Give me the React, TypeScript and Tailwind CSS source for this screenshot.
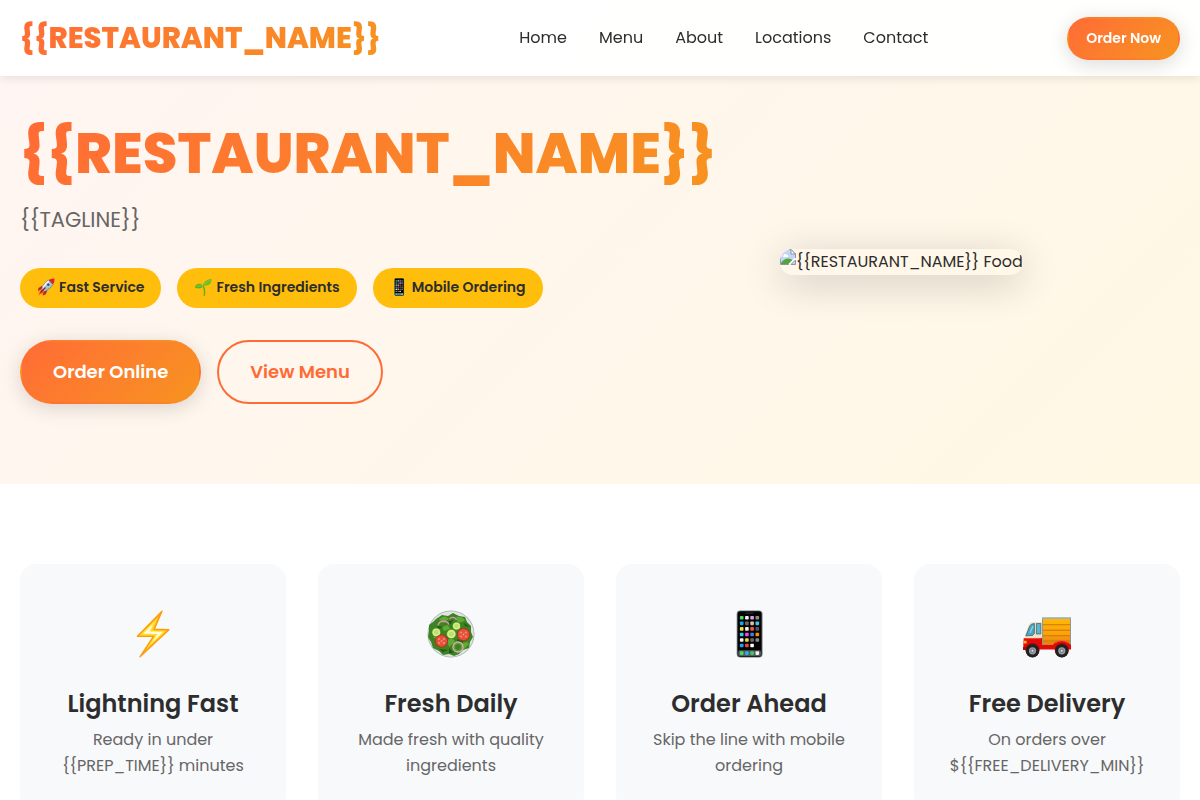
import type { ReactNode } from "react";

const GRADIENT = "bg-linear-135 from-[#ff6b35] to-[#f7931e]";
const GRADIENT_TEXT = "bg-linear-135 from-[#ff6b35] to-[#f7931e] bg-clip-text text-transparent";

function BoltIcon() {
  return (
    <svg viewBox="0 0 48 48" className="size-12" aria-hidden="true">
      <defs>
        <linearGradient id="bolt" x1="0" y1="0" x2="0" y2="1">
          <stop offset="0" stopColor="#ffb300" />
          <stop offset="0.5" stopColor="#ffd428" />
          <stop offset="1" stopColor="#ffb300" />
        </linearGradient>
      </defs>
      <path d="M33 1.200 8.500 26.200l16 .2L11 46.800 39.900 19.700 25.200 19.200Z" fill="url(#bolt)" stroke="#ff9a0c" strokeWidth="1.400" strokeLinejoin="round" />
      <path d="M29 7.500 12.500 24.300 27.500 24.600 17.500 38.500 36 21.300 22 20.800Z" fill="#ffe94a" />
      <path d="M23.500 14.500 14.500 23.600 28.800 24 22.500 33 33.500 22.200 20.500 21.600Z" fill="#fffde6" />
    </svg>
  );
}

function Tomato({ x, y }: { x: number; y: number }) {
  return (
    <g transform={`translate(${x} ${y})`}>
      <circle r="6.500" fill="#b92a1a" />
      <circle r="5.700" fill="#e5503b" />
      <g fill="#f08a6f">
        <ellipse cx="-2.400" cy="-2" rx="1.200" ry=".9" />
        <ellipse cx="2.400" cy="-2" rx="1.200" ry=".9" />
        <ellipse cx="-2.400" cy="2" rx="1.200" ry=".9" />
        <ellipse cx="2.400" cy="2" rx="1.200" ry=".9" />
      </g>
      <circle r=".8" fill="#f7b59f" />
    </g>
  );
}

function Cucumber({ x, y, r }: { x: number; y: number; r: number }) {
  return (
    <g transform={`translate(${x} ${y})`}>
      <circle r={r} fill="#4d9a2a" />
      <circle r={r - 0.7} fill="#d6ee8e" />
      <circle r={r / 2} fill="#bfe066" />
    </g>
  );
}

function SaladIcon() {
  return (
    <svg viewBox="0 0 48 48" className="size-12" aria-hidden="true">
      <circle cx="24" cy="24" r="23.500" fill="#a9b0b0" />
      <circle cx="24" cy="24" r="22.700" fill="#dfe4e4" />
      <path d="M9 9l6-4 6 1 5-3 6 3 6 1 2 5 4 4 0 6 2 5-3 5-1 6-6 2-4 4-5 2-5-2-6 1-4-4-6-3-2-6-3-5 1-6 0-6 4-3Z" fill="#3f8222" />
      <path d="M12 9q6-5 10 0l-6 4ZM29 7q7-1 9 4l-7 2ZM6 27q5-3 8-1l-4 4ZM20 30q7-3 8 2l-6 5ZM36 33q5-2 6 1l-6 6ZM31 21l5-3 3 2-5 3ZM15 17l6-2 2 4-6 2Z" fill="#63a935" />
      <path d="M10 16l6 1-5 2ZM16 25l6 3-6 0ZM22 38l5 5-5 0ZM30 29l7 3-7 0ZM21 12l5-2-3 5ZM12 39l9 1-5 2ZM37 13l6 4-5-1Z" fill="#1f5915" />
      <g fill="none" strokeWidth="1.300">
        <path d="M11 15.500c1-5.500 9-5.500 11-1M22.500 9c2-2.500 6-2 7 1" stroke="#d995ad" />
        <circle cx="31" cy="37" r="5" stroke="#d8b3ae" />
        <circle cx="31" cy="37" r="3.600" stroke="#86b45a" strokeWidth=".7" />
      </g>
      <Cucumber x={9.300} y={22.300} r={4.600} />
      <Cucumber x={29.500} y={16} r={4.300} />
      <Cucumber x={24.300} y={24} r={5} />
      <Tomato x={14.500} y={31} />
      <Tomato x={36.500} y={24.500} />
    </svg>
  );
}

const APP_ROWS = [
  ["#45dd5c", "#f2f2f2", "#e19bea", "#8c8c8c"],
  ["#1ca5f5", "#6b6b70", "#d9c3a0", "#3cc8ee"],
  ["#f5e02e", "#f2f2f2", "#f5544a", "#55555a"],
  ["#35c8ee", "#ee4be0", "#3e7bf0", "#ff8a00"],
  ["#f2f2f2", "#f0de3c", "#6b6b70", "#8a8a8e"],
  ["#1ca5f5", "#f5443a", "#ffffff"],
];
const DOCK = ["#45dd5c", "#1fb4f0", "#35cf62", "#f2f2f2"];

function PhoneIcon({ className }: { className: string }) {
  return (
    <svg viewBox="0 0 48 48" className={className} aria-hidden="true">
      <rect x="11.700" y=".5" width="25.800" height="47" rx="3.500" fill="#6f7478" />
      <rect x="12.600" y="1.200" width="24" height="45.600" rx="3" fill="#050505" />
      <rect x="20.500" y="2.500" width="8" height="1.200" rx=".6" fill="#2b2b2e" />
      {APP_ROWS.map((row, r) =>
        row.map((color, c) => (
          <rect key={`${r}-${c}`} x={14.9 + c * 5.2} y={6 + r * 5.55} width="3.600" height="3.600" rx=".8" fill={color} />
        )),
      )}
      <rect x="13.200" y="40.300" width="22.800" height="5.700" rx="1.500" fill="#55585c" />
      {DOCK.map((color, c) => (
        <rect key={c} x={14.9 + c * 5.2} y="41.300" width="3.600" height="3.600" rx=".8" fill={color} />
      ))}
    </svg>
  );
}

function TruckIcon() {
  return (
    <svg viewBox="0 0 48 48" className="size-12" aria-hidden="true">
      <defs>
        <linearGradient id="cargo" x1="0" y1="0" x2="0" y2="1">
          <stop offset="0" stopColor="#ffb803" />
          <stop offset="0.6" stopColor="#ff9f0a" />
          <stop offset="1" stopColor="#e07f12" />
        </linearGradient>
      </defs>
      <rect x="19" y="7.200" width="29" height="30" fill="#8f979c" />
      <rect x="19" y="7.200" width="29" height="1.300" fill="#b9c3cc" />
      <rect x="20" y="9" width="27" height="26" fill="url(#cargo)" />
      <path d="M20 14.800h27M20 20.300h27M20 25.700h27M20 31h27" stroke="#c57a08" strokeWidth="1.100" />
      <path d="M1 30 5.300 15.500Q6.500 12 10.500 12H19V32H1Z" fill="#efe4ca" />
      <path d="M2.800 25.800 6.500 16.500Q7.300 13.800 11.400 13.500V23.500L9.500 25.500Z" fill="#4aa6bf" stroke="#3a5c63" strokeWidth=".7" />
      <path d="M13.400 13.500h4.400v10.500h-4.400Z" fill="#5db5cf" stroke="#3a5c63" strokeWidth=".7" />
      <path d="M7 23l3-7" stroke="#92d4df" strokeWidth="1.200" />
      <path d="M.8 28H19V35H30Q32 31 38.500 31T47 34.500H48.200V39.500H.5Q0 34 .8 28Z" fill="#e00b08" />
      <path d="M1 28.600h17M32.500 33Q34.500 30.800 38.500 30.800T45 33" stroke="#ff4a3d" strokeWidth=".9" fill="none" />
      <path d="M.6 30.800h3v2.800H.5Z" fill="#ffae35" />
      <path d="M0 37h3.500v3H0Z" fill="#b00806" />
      {[9.5, 38.8].map((cx) => (
        <g key={cx}>
          <circle cx={cx} cy="40.300" r="7" fill="#8f0a08" />
          <circle cx={cx} cy="40.800" r="6.600" fill="#202225" />
          <circle cx={cx} cy="40.800" r="3.600" fill="#9a9fa4" />
          <circle cx={cx} cy="40.800" r="2.200" fill="#7a7f84" />
          <circle cx={cx} cy="40.800" r="1" fill="#e2e5e7" />
        </g>
      ))}
    </svg>
  );
}

function RocketIcon() {
  return (
    <svg viewBox="0 0 18 18" className="size-[18px]" aria-hidden="true">
      <path d="M1 13 4 10l4 4-3 3-1-1-3 2 .7-2.600Z" fill="#f7a11b" />
      <path d="M1.500 17 4.500 11.500 7 14Z" fill="#ed4b18" />
      <path d="M5.500 7.500 1.500 10 1 13l4-2.200ZM10.500 12.500 8.500 16.500 5.500 17.500 7 13Z" fill="#c81e2b" />
      <path d="M4.500 10.500Q7 4.500 11.500 2L16 6.500Q13.500 11 7.500 13.500Z" fill="#aebfca" stroke="#526b80" strokeWidth=".6" />
      <path d="M6 9.500Q8 5.500 12 3" stroke="#f2f7fa" strokeWidth="1.500" fill="none" />
      <path d="M11.500 2Q14 .3 17.500.5 17.700 4 16 6.500Z" fill="#d52632" />
      <circle cx="11.300" cy="6.700" r="1.800" fill="#24578d" stroke="#e3edf2" strokeWidth=".6" />
      <path d="M3.500 14.500 8.500 9.500" stroke="#93202b" strokeWidth="1.300" />
    </svg>
  );
}

function SeedlingIcon() {
  return (
    <svg viewBox="0 0 18 18" className="size-[18px]" aria-hidden="true">
      <path d="M10.300 17.200Q11.200 12 9.200 8" stroke="#62b01f" strokeWidth="1.500" fill="none" strokeLinecap="round" />
      <path d="M9.300 8.200Q8.800 2.500 17.500.8 18 6.500 12.500 7.500 10.300 7.800 9.300 8.200Z" fill="#6cbc24" />
      <path d="M9.500 8.200Q6 11.800.8 9.500 1.500 5.800 5.700 5.700 8.500 5.800 9.500 8.200Z" fill="#62b322" />
      <path d="M10 7.500Q12.500 4 16 2.200M3 8.700Q6 6.700 9 7.900" stroke="#93d644" strokeWidth=".7" fill="none" />
    </svg>
  );
}

function BrokenImageIcon() {
  return (
    <svg viewBox="0 0 16 16" className="size-4 shrink-0" aria-hidden="true">
      <path d="M.5.5H11L15.500 5V9L9 15.500H.5Z" fill="#c3d5f8" stroke="#8d949c" />
      <path d="M11 .5V5h4.500Z" fill="#fff" stroke="#8d949c" strokeLinejoin="round" />
      <path d="M3.500 6.500a1.800 1.800 0 0 1 3.200-.8A1.500 1.500 0 0 1 8 8H3.500a.8.8 0 0 1 0-1.500Z" fill="#fff" />
      <path d="M1 15V14Q4 9.500 8 9.500 11 9.500 12.500 11L9 15Z" fill="#4ea63c" />
      <path d="M9 15.500 15.500 9" stroke="#fff" strokeWidth="1.600" />
      <path d="M11 15.500H15.500V11Z" fill="#c3d5f8" stroke="#8d949c" />
    </svg>
  );
}

const NAV = ["Home", "Menu", "About", "Locations", "Contact"];

const BADGES: { icon: ReactNode; label: string }[] = [
  { icon: <RocketIcon />, label: "Fast Service" },
  { icon: <SeedlingIcon />, label: "Fresh Ingredients" },
  { icon: <PhoneIcon className="size-[18px]" />, label: "Mobile Ordering" },
];

const FEATURES: { icon: ReactNode; title: string; text: string }[] = [
  { icon: <BoltIcon />, title: "Lightning Fast", text: "Ready in under {{PREP_TIME}} minutes" },
  { icon: <SaladIcon />, title: "Fresh Daily", text: "Made fresh with quality ingredients" },
  { icon: <PhoneIcon className="size-12" />, title: "Order Ahead", text: "Skip the line with mobile ordering" },
  { icon: <TruckIcon />, title: "Free Delivery", text: "On orders over ${{FREE_DELIVERY_MIN}}" },
];

export default function App() {
  return (
    <div className="min-h-screen bg-white font-[Poppins,Inter,sans-serif] text-base text-[#2d2d2d]">
      <header className="fixed inset-x-0 top-0 z-10 bg-white/95 shadow-[0_2px_10px_rgba(0,0,0,0.1)] backdrop-blur-md">
        <div className="mx-auto flex h-[76px] max-w-[1200px] items-center justify-between px-5">
          <a href="#home" className={`text-[29px] leading-[46px] font-extrabold ${GRADIENT_TEXT}`}>
            {"{{RESTAURANT_NAME}}"}
          </a>
          <nav className="flex gap-8">
            {NAV.map((item) => (
              <a key={item} href={`#${item.toLowerCase()}`} className="leading-[26px]">
                {item}
              </a>
            ))}
          </nav>
          <button
            type="button"
            className={`h-[43px] rounded-full border-2 border-transparent px-[17px] text-sm font-semibold text-white shadow-[0_4px_20px_rgba(0,0,0,0.15)] ${GRADIENT}`}
          >
            Order Now
          </button>
        </div>
      </header>

      <main>
        <section id="home" className="bg-linear-135 from-[#fff5f3] to-[#fff8e4] pt-[120px] pb-20">
          <div className="mx-auto grid max-w-[1200px] grid-cols-[auto_1fr] items-center gap-16 px-5">
            <div>
              <h1 className={`text-[56px] leading-[67px] font-extrabold ${GRADIENT_TEXT}`}>{"{{RESTAURANT_NAME}}"}</h1>
              <p className="mt-4 text-[21px] leading-[33px] text-[#666666]">{"{{TAGLINE}}"}</p>
              <ul className="mt-8 flex gap-4">
                {BADGES.map((badge) => (
                  <li
                    key={badge.label}
                    className="flex h-10 items-center gap-1 rounded-full bg-[#ffbe0b] px-[17px] pb-0.5 text-sm font-semibold"
                  >
                    {badge.icon}
                    {badge.label}
                  </li>
                ))}
              </ul>
              <div className="mt-8 flex gap-4">
                <button
                  type="button"
                  className={`h-16 rounded-full border-2 border-transparent px-[31px] text-lg font-semibold text-white shadow-[0_4px_20px_rgba(0,0,0,0.15)] ${GRADIENT}`}
                >
                  Order Online
                </button>
                <button
                  type="button"
                  className="h-16 rounded-full border-2 border-[#ff6b35] px-[31px] text-lg font-semibold text-[#ff6b35]"
                >
                  View Menu
                </button>
              </div>
            </div>
            <div className="flex">
              <div className="flex h-[26px] overflow-hidden rounded-[20px] leading-[26px] whitespace-nowrap shadow-[0_8px_40px_rgba(0,0,0,0.2)]">
                <BrokenImageIcon />
                {"{{RESTAURANT_NAME}} Food"}
              </div>
            </div>
          </div>
        </section>

        <section className="py-20">
          <div className="mx-auto grid max-w-[1200px] grid-cols-4 gap-8 px-5">
            {FEATURES.map((feature) => (
              <article key={feature.title} className="flex flex-col items-center rounded-2xl bg-[#f8f9fb] px-8 pt-[46px] pb-8 text-center">
                {feature.icon}
                <h2 className="mt-[27px] text-2xl leading-[38px] font-semibold">{feature.title}</h2>
                <p className="mt-1 leading-[26px] text-[#666666]">{feature.text}</p>
              </article>
            ))}
          </div>
        </section>
      </main>
    </div>
  );
}
